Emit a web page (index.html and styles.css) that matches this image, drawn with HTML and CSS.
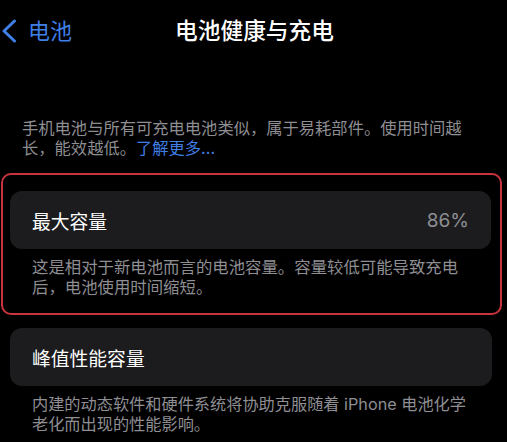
FILE: index.html
```html
<!DOCTYPE html>
<html lang="zh-CN">
<head>
<meta charset="utf-8">
<title>电池健康与充电</title>
<link rel="stylesheet" href="styles.css">
</head>
<body>
<div class="page">
  <header class="nav">
    <a class="back">
      <svg class="chev" width="16" height="24" viewBox="0 0 16 24"><path d="M13.5 2 L3 12 L13.5 22" fill="none" stroke="#3f7fe6" stroke-width="3" stroke-linecap="round" stroke-linejoin="round"/></svg>
      <span class="back-label">电池</span>
    </a>
    <h1 class="title">电池健康与充电</h1>
    <span class="spacer"></span>
  </header>

  <p class="intro">手机电池与所有可充电电池类似，属于易耗部件。使用时间越长，能效越低。<span class="link">了解更多...</span></p>

  <section class="highlight">
    <div class="card">
      <span class="card-label">最大容量</span>
      <span class="card-value">86%</span>
    </div>
    <p class="note">这是相对于新电池而言的电池容量。容量较低可能导致充电后，电池使用时间缩短。</p>
  </section>

  <section class="group">
    <div class="card">
      <span class="card-label">峰值性能容量</span>
    </div>
    <p class="note note-wide">内建的动态软件和硬件系统将协助克服随着 iPhone 电池化学老化而出现的性能影响。</p>
  </section>
</div>
</body>
</html>
```

FILE: styles.css
```css
html, body {
  margin: 0;
  padding: 0;
  background: #000;
}
body {
  font-family: "Inter", "Noto Sans CJK SC", sans-serif;
  color: #fff;
  width: 507px;
  height: 442px;
  overflow: hidden;
  text-spacing-trim: space-all;
  line-break: strict;
}
.page {
  display: flex;
  flex-direction: column;
}
.nav {
  height: 62px;
  display: grid;
  grid-template-columns: 1fr auto 1fr;
  align-items: center;
}
.back {
  display: flex;
  align-items: center;
  gap: 11px;
  padding-left: 1px;
  color: #3f7fe6;
}
.chev {
  display: block;
}
.back-label {
  font-size: 22px;
  line-height: 26px;
}
.title {
  margin: 0;
  font-size: 22.7px;
  line-height: 26px;
  font-weight: 500;
  color: #fff;
  padding-left: 2px;
}
.intro {
  margin: 56px 0 0 0;
  padding: 0 42px 0 22px;
  font-size: 16.3px;
  line-height: 20px;
  color: #8e8e93;
}
.link {
  color: #3f7fe6;
}
.highlight {
  margin: 15px 5px 0 1px;
  border: 2px solid #c8343e;
  border-radius: 10px;
  padding: 16px 9px 16px 7px;
}
.group {
  margin: 13px 15px 0 10px;
}
.card {
  height: 58px;
  background: #1c1c1e;
  border-radius: 12px;
  display: flex;
  align-items: center;
  justify-content: space-between;
  padding: 0 22px;
}
.card-label {
  font-size: 18.8px;
  color: #fff;
}
.card-value {
  font-size: 19px;
  color: #8e8e93;
}
.note {
  margin: 9px 0 0 0;
  padding: 0 22px 0 22px;
  font-size: 16.4px;
  line-height: 19.5px;
  color: #8e8e93;
}
.note-wide {
  padding-right: 10px;
  font-size: 16.2px;
}
```
